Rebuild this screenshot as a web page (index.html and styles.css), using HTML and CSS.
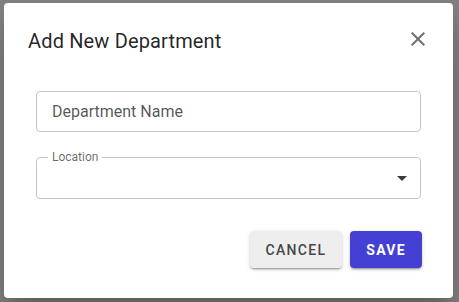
FILE: index.html
```html
<!DOCTYPE html>
<html lang="en">
<head>
    <meta charset="UTF-8">
    <meta name="viewport" content="width=device-width, initial-scale=1.0">
    <title>Add New Department</title>
    <link rel="stylesheet" href="styles.css">
</head>
<body>
    <div class="dialog">
        <div class="dialog-title">
            <h2>Add New Department</h2>
            <button class="close-btn" aria-label="close">
                <svg viewBox="0 0 24 24" width="24" height="24"><path d="M19 6.41 17.59 5 12 10.59 6.41 5 5 6.41 10.59 12 5 17.59 6.41 19 12 13.41 17.59 19 19 17.59 13.41 12z"/></svg>
            </button>
        </div>

        <div class="dialog-content">
            <div class="text-field">
                <span class="placeholder">Department Name</span>
            </div>
            <div class="select-field">
                <span class="notch-label">Location</span>
                <svg class="arrow" viewBox="0 0 24 24" width="24" height="24"><path d="M7 10l5 5 5-5z"/></svg>
            </div>
        </div>

        <div class="dialog-actions">
            <button class="btn btn-cancel">Cancel</button>
            <button class="btn btn-save">Save</button>
        </div>
    </div>
</body>
</html>
```

FILE: styles.css
```css
body {
    margin: 0;
    padding: 3px 6px 4px 4px;
    background: #808080;
    font-family: Roboto, "Liberation Sans", Arial, sans-serif;
}

.dialog {
    background: #fff;
    border-radius: 4px;
    height: 295px;
    box-sizing: border-box;
    box-shadow: 0 11px 15px -7px rgba(0,0,0,0.2), 0 24px 38px 3px rgba(0,0,0,0.14);
}

.dialog-title {
    display: flex;
    justify-content: space-between;
    align-items: center;
    padding: 19px 15px 0 24px;
}

.dialog-title h2 {
    margin: 0;
    font-size: 20px;
    font-weight: 400;
    line-height: 32px;
    letter-spacing: 0.15px;
    color: rgba(0, 0, 0, 0.87);
}

.close-btn {
    display: flex;
    padding: 8px;
    border: none;
    background: none;
    margin-top: -3px;
}

.close-btn svg {
    fill: #6f6f6f;
}

.dialog-content {
    padding: 0 32px;
    margin-top: 32px;
}

.text-field {
    display: flex;
    align-items: center;
    height: 41px;
    box-sizing: border-box;
    border: 1px solid #c4c4c4;
    border-radius: 4px;
    padding: 0 15px;
}

.placeholder {
    font-size: 16px;
    color: rgba(0, 0, 0, 0.68);
}

.select-field {
    position: relative;
    display: flex;
    align-items: center;
    justify-content: flex-end;
    height: 42px;
    box-sizing: border-box;
    margin-top: 25px;
    border: 1px solid #c4c4c4;
    border-radius: 4px;
    padding-right: 6px;
}

.notch-label {
    position: absolute;
    top: -8px;
    left: 11px;
    padding: 0 4px;
    background: #fff;
    font-size: 12px;
    line-height: 14px;
    color: rgba(0, 0, 0, 0.6);
}

.arrow {
    fill: #3a3a3a;
}

.dialog-actions {
    display: flex;
    justify-content: flex-end;
    gap: 8px;
    padding: 32px 31px 0;
}

.btn {
    height: 37px;
    padding: 0 16px;
    border: none;
    border-radius: 4px;
    font-family: inherit;
    font-size: 14px;
    font-weight: 500;
    letter-spacing: 1.3px;
    text-transform: uppercase;
    box-shadow: 0 3px 1px -2px rgba(0,0,0,0.2), 0 2px 2px 0 rgba(0,0,0,0.14), 0 1px 5px 0 rgba(0,0,0,0.12);
}

.btn-cancel {
    background: #eeeeee;
    color: #474747;
}

.btn-save {
    background: #4440d4;
    color: #fff;
    font-weight: 700;
}
```
